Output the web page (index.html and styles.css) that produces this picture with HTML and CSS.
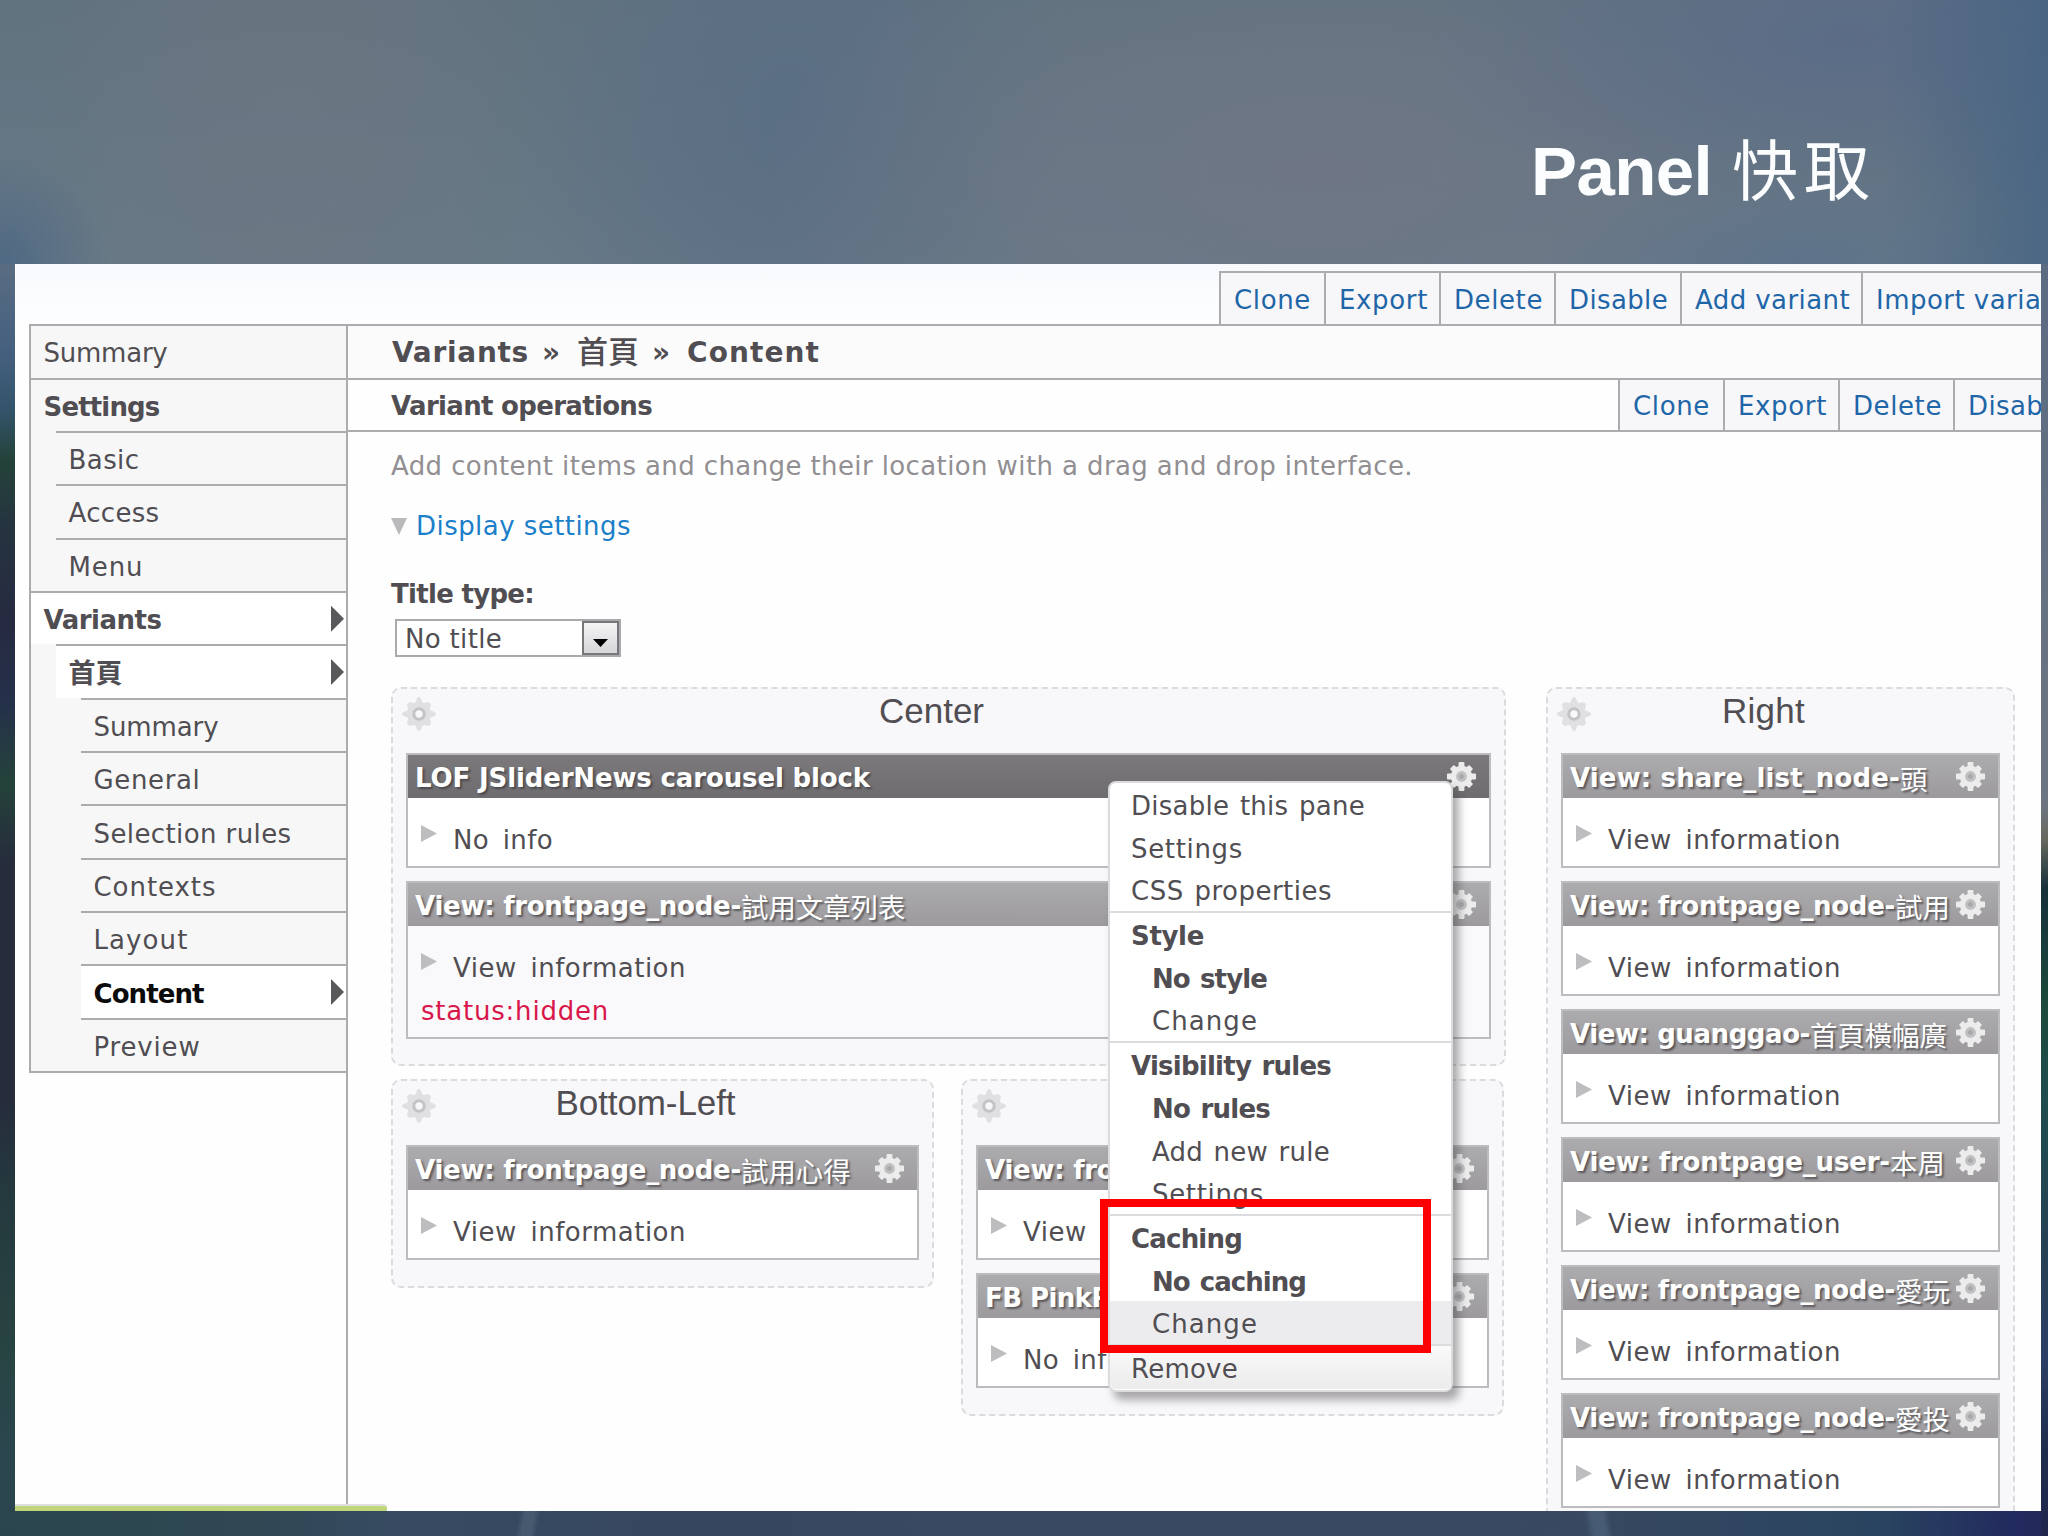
FILE: index.html
```html
<!DOCTYPE html>
<html lang="zh-Hant">
<head>
<meta charset="utf-8">
<title>Panel 快取</title>
<link rel="stylesheet" href="styles.css">
</head>
<body>
<svg class="defs" aria-hidden="true">
  <symbol id="gear" viewBox="-16 -16 32 32">
    <g fill="#ececed">
      <circle r="11"/>
      <rect x="-3" y="-15" width="6" height="30" rx="1"/><rect x="-15" y="-3" width="30" height="6" rx="1"/>
      <g transform="rotate(45)"><rect x="-3" y="-14" width="6" height="28" rx="1"/><rect x="-14" y="-3" width="28" height="6" rx="1"/></g>
    </g>
    <circle class="hub" r="5.6"/>
    <circle class="hub-in" r="2.6"/>
  </symbol>
  <symbol id="flower" viewBox="-17 -17 34 34">
    <g fill="#e0dfe1">
      <circle r="12"/>
      <ellipse rx="4.6" ry="17"/><ellipse rx="17" ry="4.6"/>
      <ellipse rx="6" ry="15.5" transform="rotate(45)"/><ellipse rx="6" ry="15.5" transform="rotate(-45)"/>
    </g>
    <circle r="5.2" fill="#f8f7f9" stroke="#c3c2c4" stroke-width="3"/>
  </symbol>
</svg>

<header class="slide-head"><h1>Panel <span>快取</span></h1></header>

<div class="screen">
  <div class="topbar">
    <nav class="tabs tabs-top">
      <a class="t1"><span class="fit" data-w="77">Clone</span></a><a class="t2"><span class="fit" data-w="89">Export</span></a><a class="t2"><span class="fit" data-w="89">Delete</span></a><a class="t3"><span class="fit" data-w="99">Disable</span></a><a class="t4"><span class="fit" data-w="155">Add variant</span></a><a class="t5"><span class="fit" data-w="193">Import variant</span></a>
    </nav>
  </div>

  <div class="body">
    <aside class="side">
      <ul>
        <li><span class="fit" data-w="124">Summary</span></li>
        <li class="b"><span class="fit" data-w="116">Settings</span></li>
        <li class="l1"><span class="fit" data-w="71">Basic</span></li>
        <li class="l1"><span class="fit" data-w="91">Access</span></li>
        <li class="l1"><span class="fit" data-w="75">Menu</span></li>
        <li class="b on"><span class="fit" data-w="118">Variants</span><i></i></li>
        <li class="l1 b on"><span class="han">首頁</span><i></i></li>
        <li class="l2"><span class="fit" data-w="125">Summary</span></li>
        <li class="l2"><span class="fit" data-w="107">General</span></li>
        <li class="l2"><span class="fit" data-w="198">Selection rules</span></li>
        <li class="l2"><span class="fit" data-w="123">Contexts</span></li>
        <li class="l2"><span class="fit" data-w="95">Layout</span></li>
        <li class="l2 b on cur"><span class="fit" data-w="110">Content</span><i></i></li>
        <li class="l2"><span class="fit" data-w="107">Preview</span></li>
      </ul>
    </aside>

    <main class="main">
      <h2><span class="fit" data-w="137">Variants</span><span class="fit" data-w="22">»</span><span class="han">首頁</span><span class="fit" data-w="22">»</span><span class="fit" data-w="133">Content</span></h2>
      <div class="ops">
        <h3><span class="fit" data-w="261">Variant operations</span></h3>
        <nav class="tabs">
          <a class="t1"><span class="fit" data-w="77">Clone</span></a><a class="t2"><span class="fit" data-w="89">Export</span></a><a class="t2"><span class="fit" data-w="89">Delete</span></a><a class="t3"><span class="fit" data-w="99">Disable</span></a>
        </nav>
      </div>

      <div class="content">
        <p class="desc"><span class="fit" data-w="1022">Add content items and change their location with a drag and drop interface.</span></p>
        <p class="toggle"><i></i><a><span class="fit" data-w="215">Display settings</span></a></p>
        <p class="label"><span class="fit" data-w="143">Title type:</span></p>
        <div class="select"><span class="fit" data-w="97">No title</span><b><i></i></b></div>

        <div class="columns">
          <div class="left">
            <section class="region center">
              <svg class="flower"><use href="#flower"/></svg>
              <h4><span class="fit" data-w="105">Center</span></h4>
              <article class="pane dark">
                <header><span class="fit" data-w="455">LOF JSliderNews carousel block</span><svg class="gear"><use href="#gear"/></svg></header>
                <p><i></i><span class="fit" data-w="100">No info</span></p>
              </article>
              <article class="pane muted">
                <header><span class="fit" data-w="326">View: frontpage_node-</span><span class="cjk">試用文章列表</span><svg class="gear"><use href="#gear"/></svg></header>
                <p><i></i><span class="fit" data-w="233">View information</span></p>
                <p class="status"><span class="fit" data-w="188">status:hidden</span></p>
              </article>

              <div class="menu">
                <ul><li><span class="fit" data-w="234">Disable this pane</span></li><li><span class="fit" data-w="112">Settings</span></li><li><span class="fit" data-w="201">CSS properties</span></li></ul>
                <ul><li class="b"><span class="fit" data-w="73">Style</span></li><li class="b in"><span class="fit" data-w="115">No style</span></li><li class="in"><span class="fit" data-w="106">Change</span></li></ul>
                <ul><li class="b"><span class="fit" data-w="200">Visibility rules</span></li><li class="b in"><span class="fit" data-w="118">No rules</span></li><li class="in"><span class="fit" data-w="178">Add new rule</span></li><li class="in"><span class="fit" data-w="112">Settings</span></li></ul>
                <ul><li class="b"><span class="fit" data-w="111">Caching</span></li><li class="b in"><span class="fit" data-w="154">No caching</span></li><li class="in hover"><span class="fit" data-w="106">Change</span></li></ul>
                <ul class="last"><li><span class="fit" data-w="107">Remove</span></li></ul>
                <div class="marker"></div>
              </div>
            </section>

            <div class="bottom">
              <section class="region">
                <svg class="flower"><use href="#flower"/></svg>
                <h4><span class="fit" data-w="180">Bottom-Left</span></h4>
                <article class="pane">
                  <header><span class="fit" data-w="326">View: frontpage_node-</span><span class="cjk">試用心得</span><svg class="gear"><use href="#gear"/></svg></header>
                  <p><i></i><span class="fit" data-w="233">View information</span></p>
                </article>
              </section>
              <section class="region">
                <svg class="flower"><use href="#flower"/></svg>
                <h4></h4>
                <article class="pane">
                  <header><span class="fit" data-w="326">View: frontpage_node-</span><svg class="gear"><use href="#gear"/></svg></header>
                  <p><i></i><span class="fit" data-w="233">View information</span></p>
                </article>
                <article class="pane">
                  <header><span class="fit" data-w="125">FB PinkP</span><svg class="gear"><use href="#gear"/></svg></header>
                  <p><i></i><span class="fit" data-w="100">No info</span></p>
                </article>
              </section>
            </div>
          </div>

          <section class="region right">
            <svg class="flower"><use href="#flower"/></svg>
            <h4><span class="fit" data-w="83">Right</span></h4>
            <article class="pane">
              <header><span class="fit" data-w="330">View: share_list_node-</span><span class="cjk">頭</span><svg class="gear"><use href="#gear"/></svg></header>
              <p><i></i><span class="fit" data-w="233">View information</span></p>
            </article>
            <article class="pane">
              <header><span class="fit" data-w="325">View: frontpage_node-</span><span class="cjk">試用</span><svg class="gear"><use href="#gear"/></svg></header>
              <p><i></i><span class="fit" data-w="233">View information</span></p>
            </article>
            <article class="pane">
              <header><span class="fit" data-w="240">View: guanggao-</span><span class="cjk">首頁橫幅廣</span><svg class="gear"><use href="#gear"/></svg></header>
              <p><i></i><span class="fit" data-w="233">View information</span></p>
            </article>
            <article class="pane">
              <header><span class="fit" data-w="320">View: frontpage_user-</span><span class="cjk">本周</span><svg class="gear"><use href="#gear"/></svg></header>
              <p><i></i><span class="fit" data-w="233">View information</span></p>
            </article>
            <article class="pane">
              <header><span class="fit" data-w="325">View: frontpage_node-</span><span class="cjk">愛玩</span><svg class="gear"><use href="#gear"/></svg></header>
              <p><i></i><span class="fit" data-w="233">View information</span></p>
            </article>
            <article class="pane">
              <header><span class="fit" data-w="325">View: frontpage_node-</span><span class="cjk">愛投</span><svg class="gear"><use href="#gear"/></svg></header>
              <p><i></i><span class="fit" data-w="233">View information</span></p>
            </article>
          </section>
        </div>
      </div>
    </main>
  </div>
  <div class="statusbar"></div>
</div>
<script src="fit.js"></script>
</body>
</html>
```
FILE: styles.css
```css
* { box-sizing: border-box; margin: 0; padding: 0; }
ul { list-style: none; }

body {
  width: 2048px;
  height: 1536px;
  overflow: hidden;
  font: 26px/1.2 "DejaVu Sans", "Noto Sans CJK TC", sans-serif;
  color: #504e52;
  background:
    linear-gradient(100deg, transparent 40%, #47596f 48%, #47596f 60%, transparent 68%) 490px 1510px / 70px 26px no-repeat,
    linear-gradient(80deg, transparent 32%, #475b75 42%, #475b75 55%, transparent 63%) 1560px 1510px / 80px 26px no-repeat,
    linear-gradient(180deg, #5f7083 240px, #45607f 350px, #33546a 410px, #244239 460px, #253340 530px, #262a40 620px, #25304a 700px, #24423a 785px, #262c3c 860px, #262c3c 1100px, #24393e 1190px, #284442 1350px, #2c4650 1470px, #2b454e) 0 0 / 15px 1536px no-repeat,
    linear-gradient(180deg, #5b6b82 0, #6d7582 540px, #67695f 575px, #16303a 625px, #1c4a3c 740px, #1f4d4e 830px, #264055 1000px, #2c3f66 1090px, #1e2c4c 1190px, #20264e) 2041px 264px / 7px 1272px no-repeat,
    linear-gradient(90deg, #2b454e 0, #2f4853 250px, #374a62 400px, #36465f 700px, #394962 1000px, #374860 1600px, #294460 1880px, #222b5e 2010px, #22285a) 0 1510px / 2048px 26px no-repeat,
    #5f7488;
}
.defs { position: absolute; width: 0; height: 0; }
.fit { display: inline-block; white-space: pre; }
.b { font-weight: 700; }

.slide-head {
  height: 264px;
  padding: 132px 0 0 1531px;
  background:
    linear-gradient(90deg, transparent 92%, rgba(66, 97, 131, .75)),
    radial-gradient(ellipse 420px 190px at 1850px 40px, rgba(88, 104, 138, .7), transparent),
    radial-gradient(ellipse 260px 90px at 1800px 264px, rgba(88, 112, 142, .6), transparent),
    radial-gradient(ellipse 560px 260px at 1320px 170px, rgba(112, 118, 134, .85), transparent),
    radial-gradient(ellipse 260px 420px at 290px 120px, rgba(108, 118, 130, .75), transparent),
    radial-gradient(ellipse 110px 110px at 0 264px, rgba(73, 101, 131, .8), transparent),
    radial-gradient(ellipse 280px 330px at 790px 110px, #5a6e84, transparent),
    linear-gradient(180deg, #61737f, #677986);
}
.slide-head h1 {
  display: flex;
  gap: 20px;
  align-items: baseline;
  font: 700 69px/80px "Liberation Sans", "Noto Sans CJK TC", sans-serif;
  letter-spacing: -0.6px;
  color: #fcfdfe;
}
.slide-head span { font-weight: 400; font-size: 66px; letter-spacing: 6px; }

.screen {
  position: relative;
  width: 2026px;
  height: 1247px;
  margin-left: 15px;
  padding-left: 1px;
  overflow: hidden;
  background: #fefefe;
}
.topbar {
  height: 60px;
  padding: 7px 0 0 1203px;
  background: linear-gradient(180deg, #f7f9fc, #fdfeff);
}
.tabs { display: flex; color: #1f66a8; }
.tabs a {
  flex: none;
  padding-left: 13px;
  background: #f7f7f9;
  border-left: 2px solid #acabad;
}
.tabs-top a { height: 53px; line-height: 54px; border-top: 2px solid #acabad; }
.tabs .t1 { width: 105px; }
.tabs .t2 { width: 115px; }
.tabs .t3 { width: 126px; }
.tabs .t4 { width: 181px; }
.tabs .t5 { width: 220px; }

.body { display: flex; height: 1187px; }
.side { flex: none; width: 330px; padding-left: 13px; }
.side ul {
  height: 749px;
  border: solid #acabad;
  border-width: 2px 0 2px 2px;
  background: #f7f7f8;
}
.side li {
  display: flex;
  justify-content: space-between;
  align-items: center;
  height: 53.35px;
  padding-left: 13px;
  border-top: 2px solid #acabad;
  line-height: 51px;
}
.side li:first-child { height: 51.6px; border-top: 0; }
.side li span { position: relative; top: 2px; left: -0.5px; }
.side li .han { font-size: 27px; }
.side .l1 { margin-left: 25px; }
.side .l2 { margin-left: 50px; }
.side .on { background-color: #fff; }
.side .cur { color: #0b0b0c; }
.side i {
  width: 13px;
  height: 26px;
  margin-right: 2px;
  background: #59585b;
  clip-path: polygon(0 0, 100% 50%, 0 100%);
}

.main { flex: none; width: 1695px; border-left: 2px solid #acabad; }
.main h2 {
  display: flex;
  gap: 13px;
  height: 54px;
  padding-left: 44px;
  font-size: 28px;
  line-height: 53px;
  background: #fbfbfc;
  border-top: 2px solid #acabad;
}
.main h2 .han { font-size: 31px; font-weight: 500; }
.ops {
  display: flex;
  justify-content: space-between;
  height: 54px;
  padding-left: 43px;
  border: solid #acabad;
  border-width: 2px 0;
}
.ops .tabs a { height: 50px; line-height: 53px; }
.ops h3 { font-size: 26px; line-height: 53px; }
.ops .tabs { width: 423px; }

.content { padding: 14px 0 0 43px; }
.content .desc { height: 60px; line-height: 40px; color: #918f92; }
.toggle { display: flex; height: 67px; color: #1b7fc9; line-height: 40px; }
.toggle i {
  width: 16px;
  height: 17px;
  margin: 12px 9px 0 0;
  background: #bab9bb;
  clip-path: polygon(0 0, 100% 0, 50% 100%);
}
.label { height: 46px; font-weight: 700; line-height: 42px; }
.select {
  display: flex;
  justify-content: space-between;
  width: 226px;
  height: 38px;
  margin: 0 0 30px 4px;
  padding-left: 8px;
  line-height: 36px;
  background: #fff;
  border: 2px solid #aaa9ab;
}
.select b {
  width: 37px;
  height: 34px;
  padding: 16px 0 0 9px;
  background: linear-gradient(180deg, #f4f4f5, #d6d5d8);
  border: 2px solid #77767a;
}
.select i {
  display: block;
  width: 15px;
  height: 8px;
  background: #000;
  clip-path: polygon(0 0, 100% 0, 50% 100%);
}

.columns { display: flex; gap: 40px; align-items: flex-start; }
.left { width: 1115px; }
.region {
  position: relative;
  padding: 0 13px 12px;
  background: #f8f7f9;
  border: 2px dashed #dbdadd;
  border-radius: 10px;
}
.center { height: 379px; }
.right { width: 469px; height: 900px; }
.flower { position: absolute; left: 9px; top: 8px; width: 34px; height: 34px; }
.region h4 {
  height: 64px;
  padding-right: 34px;
  font: 400 35px/43px "Liberation Sans", Arial, sans-serif;
  text-align: center;
}
.pane {
  height: 115px;
  margin-bottom: 13px;
  background: #fff;
  border: 2px solid #bcbbbd;
}
.muted { height: 158px; background: #f9f8fa; }
.pane header {
  display: flex;
  position: relative;
  height: 43px;
  padding-left: 7px;
  font-weight: 700;
  line-height: 46px;
  white-space: nowrap;
  color: #fff;
  text-shadow: 2px 2px 2px rgba(60, 58, 62, .7);
  background: linear-gradient(180deg, #acabad, #9c9a9d);
}
.dark header { background: linear-gradient(180deg, #7b797c, #6e6c6f); }
.pane .cjk { font-size: 27.4px; font-weight: 400; font-family: "Noto Sans CJK TC", sans-serif; }
.gear { position: absolute; right: 12px; top: 6px; width: 31px; height: 31px; }
.hub { fill: #c0bfc1; }
.hub-in { fill: #a9a8aa; }
.dark .hub { fill: #a3a2a4; }
.dark .hub-in { fill: #757376; }
.pane p {
  display: flex;
  height: 41px;
  margin-top: 16px;
  padding-left: 13px;
  line-height: 52px;
  word-spacing: 5px;
}
.pane p i {
  width: 16px;
  height: 17px;
  margin: 11px 16px 0 0;
  background: #bdbcbe;
  clip-path: polygon(0 0, 100% 50%, 0 100%);
}
.pane p.status { margin-top: 2px; color: #d8164a; }

.bottom { display: flex; gap: 27px; align-items: flex-start; margin-top: 13px; }
.bottom .region { width: 543px; padding-bottom: 13px; }

.menu {
  position: absolute;
  z-index: 2;
  left: 715px;
  top: 92px;
  width: 345px;
  height: 611px;
  background: #fff;
  border: 2px solid #dcdbdd;
  border-radius: 8px;
  box-shadow: 6px 8px 9px rgba(70, 68, 72, .45);
}
.menu ul { border-bottom: 2px solid #dcdbdd; }
.menu li { height: 42.7px; padding-left: 21px; line-height: 47px; word-spacing: 2px; }
.menu .in { padding-left: 42px; }
.menu .hover { background: #ececee; }
.menu ul.last { height: 43px; border: 0; border-radius: 0 0 6px 6px; background: linear-gradient(180deg, #fafafa, #ebebec); }
.marker {
  position: absolute;
  left: -10px;
  top: 416px;
  width: 331px;
  height: 154px;
  border: 8px solid #fe0000;
}
.statusbar {
  position: absolute;
  left: 0;
  bottom: 0;
  width: 372px;
  height: 7px;
  background: #c1d67b;
  border-top: 2px solid #dfdfe0;
  border-radius: 0 4px 0 0;
}
```
FILE: fit.js
```js
// Spread each label's tracking so it fills the width given in data-w.
document.querySelectorAll('.fit').forEach(function (el) {
  var gap = Number(el.dataset.w) - el.getBoundingClientRect().width;
  el.style.letterSpacing = (gap / el.textContent.length).toFixed(3) + 'px';
});
```
